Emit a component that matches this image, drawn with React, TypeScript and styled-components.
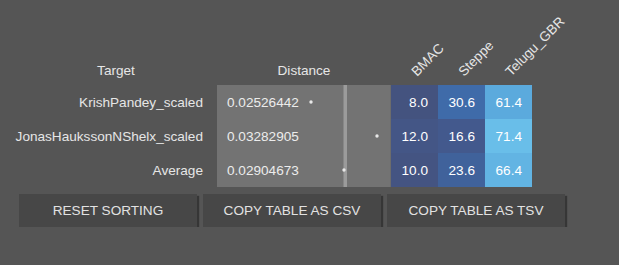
import React from "react";
import styled, { createGlobalStyle } from "styled-components";

const GlobalStyle = createGlobalStyle`
  html, body {
    margin: 0;
    padding: 0;
    background: #555555;
  }
  body {
    font-family: "Liberation Sans", Arial, sans-serif;
    font-size: 13.6px;
    color: #e6e6e6;
  }
`;

type Row = {
  target: string;
  distance: number;
  values: number[];
};

const populations = ["BMAC", "Steppe", "Telugu_GBR"];

const rows: Row[] = [
  { target: "KrishPandey_scaled", distance: 0.02526442, values: [8.0, 30.6, 61.4] },
  { target: "JonasHaukssonNShelx_scaled", distance: 0.03282905, values: [12.0, 16.6, 71.4] },
];

const average: Row = {
  target: "Average",
  distance: 0.02904673,
  values: [10.0, 23.6, 66.4],
};

// Heat-map colour stops: dark navy for low shares, sky blue for high ones.
const stops: [number, [number, number, number]][] = [
  [8, [68, 83, 127]],
  [16, [67, 88, 140]],
  [30, [62, 106, 168]],
  [61, [90, 169, 220]],
  [72, [106, 191, 234]],
];

function heatColor(v: number): string {
  if (v <= stops[0][0]) return `rgb(${stops[0][1].join(",")})`;
  for (let i = 1; i < stops.length; i++) {
    const [x1, c1] = stops[i];
    const [x0, c0] = stops[i - 1];
    if (v <= x1) {
      const t = (v - x0) / (x1 - x0);
      const c = c0.map((a, k) => Math.round(a + (c1[k] - a) * t));
      return `rgb(${c.join(",")})`;
    }
  }
  return `rgb(${stops[stops.length - 1][1].join(",")})`;
}

const Page = styled.div`
  padding-left: 15px;
`;

const Table = styled.table`
  border-collapse: collapse;
  border-spacing: 0;
`;

const HeadCell = styled.th<{ $width: number }>`
  width: ${(p) => p.$width}px;
  height: 85px;
  padding: 0 0 7px 0;
  box-sizing: border-box;
  vertical-align: bottom;
  text-align: center;
  font-weight: normal;
  line-height: 15px;
  color: #e6e6e6;
`;

const RotatedHead = styled.th`
  width: 47px;
  height: 85px;
  padding: 0;
  vertical-align: bottom;
  text-align: left;
  font-weight: normal;
`;

const RotatedLabel = styled.div`
  width: 0;
  height: 15px;
  line-height: 15px;
  white-space: nowrap;
  text-align: left;
  color: #e6e6e6;
  transform-origin: 0 100%;
  transform: translate(28px, -6px) rotate(-45deg);
`;

const TargetCell = styled.td`
  height: 34px;
  padding: 0 14px 0 0;
  text-align: right;
  vertical-align: middle;
  white-space: nowrap;
  color: #e6e6e6;
`;

const DistanceCell = styled.td`
  height: 34px;
  padding: 0;
  background: #737373;
  box-shadow: inset -1px 0 0 #6c6c6c;
`;

const DistanceInner = styled.div`
  display: flex;
  align-items: center;
  height: 34px;
`;

const DistanceValue = styled.span`
  width: 73px;
  padding-left: 10px;
  color: #ececec;
`;

const Plot = styled.svg`
  display: block;
  flex: 0 0 91px;
`;

const HeatCell = styled.td`
  height: 34px;
  padding: 0 10px 0 0;
  text-align: right;
  vertical-align: middle;
  color: #ffffff;
`;

const ButtonRow = styled.div`
  display: flex;
  gap: 6px;
  margin-top: 7px;
  padding-left: 4px;
`;

const ActionButton = styled.button`
  width: 178px;
  height: 33px;
  border: none;
  border-radius: 0;
  background: #474747;
  color: #e2e2e2;
  font-family: "Liberation Sans", Arial, sans-serif;
  font-size: 13.6px;
  text-transform: uppercase;
  box-shadow: 2px 2px 1px #363636;
  cursor: pointer;
  padding: 0;
`;

const dMin = Math.min(...rows.map((r) => r.distance));
const dMax = Math.max(...rows.map((r) => r.distance));
const plotX = (v: number) => 11 + ((v - dMin) / (dMax - dMin)) * 66;

function DistancePlot({ value }: { value: number }) {
  return (
    <Plot width={91} height={34} viewBox="0 0 91 34">
      <rect x={plotX(average.distance) - 0.5} y={0} width={3.5} height={34} fill="#9b9b9b" />
      <circle cx={plotX(value)} cy={17} r={1.7} fill="#e8e8e8" />
    </Plot>
  );
}

function DataRow({ row }: { row: Row }) {
  return (
    <tr>
      <TargetCell>{row.target}</TargetCell>
      <DistanceCell>
        <DistanceInner>
          <DistanceValue>{row.distance.toFixed(8)}</DistanceValue>
          <DistancePlot value={row.distance} />
        </DistanceInner>
      </DistanceCell>
      {row.values.map((v, i) => (
        <HeatCell key={i} style={{ background: heatColor(v) }}>
          {v.toFixed(1)}
        </HeatCell>
      ))}
    </tr>
  );
}

export default function App() {
  return (
    <Page>
      <GlobalStyle />
      <Table>
        <thead>
          <tr>
            <HeadCell $width={202}>Target</HeadCell>
            <HeadCell $width={174}>Distance</HeadCell>
            {populations.map((p) => (
              <RotatedHead key={p}>
                <RotatedLabel>{p}</RotatedLabel>
              </RotatedHead>
            ))}
          </tr>
        </thead>
        <tbody>
          {rows.map((r) => (
            <DataRow key={r.target} row={r} />
          ))}
          <DataRow row={average} />
        </tbody>
      </Table>
      <ButtonRow>
        <ActionButton>Reset sorting</ActionButton>
        <ActionButton>Copy table as CSV</ActionButton>
        <ActionButton>Copy table as TSV</ActionButton>
      </ButtonRow>
    </Page>
  );
}
